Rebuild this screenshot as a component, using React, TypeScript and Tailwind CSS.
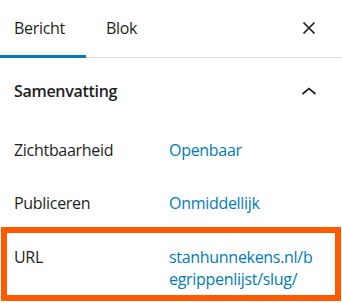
const CloseIcon = () => (
  <svg width="24" height="24" viewBox="0 0 24 24" fill="none">
    <path d="M6.5 6.5l11 11M17.5 6.5l-11 11" stroke="#1e1e1e" strokeWidth="1.7" />
  </svg>
);

const ChevronUp = () => (
  <svg width="24" height="24" viewBox="0 0 24 24" fill="none">
    <path d="M5.5 15l6.5-5.5 6.5 5.5" stroke="#1e1e1e" strokeWidth="1.7" />
  </svg>
);

const App = () => {
  return (
    <div
      className="w-[342px] h-[303px] bg-white text-[#1e1e1e] overflow-hidden text-[16px] tracking-[-0.3px]"
      style={{ fontFamily: '"Open Sans", "Noto Sans", sans-serif' }}
    >
      {/* Tabs */}
      <div className="flex h-[58px] border-b border-[#e0e0e0]">
        <div className="w-[86px] h-[58px] -mb-px flex items-center pl-[14px] pt-[1px] border-b-[3px] border-[#007cba]">
          Bericht
        </div>
        <div className="flex items-center pl-[20px] pb-[2px]">Blok</div>
        <div className="ml-auto mr-[21px] flex items-center pb-[2px]">
          <CloseIcon />
        </div>
      </div>

      {/* Samenvatting */}
      <div className="flex items-center justify-between h-[66px] pl-[14px] pr-[21px] pb-[1px]">
        <span className="font-semibold">Samenvatting</span>
        <ChevronUp />
      </div>

      {/* Rows */}
      <div className="flex flex-col">
        <div className="flex items-center h-[53px] pl-[14px] pb-[2px]">
          <span className="w-[155px]">Zichtbaarheid</span>
          <span className="text-[#007cba]">Openbaar</span>
        </div>
        <div className="flex items-center h-[53px] pl-[14px] pb-[2px]">
          <span className="w-[155px]">Publiceren</span>
          <span className="text-[#007cba]">Onmiddellijk</span>
        </div>
        <div className="mx-[1px] -mt-[3px] h-[74px] border-[6px] border-[#ff5a00] flex pl-[7px] pt-[13px]">
          <span className="w-[155px] leading-[22px]">URL</span>
          <span className="text-[#007cba] leading-[22px]">
            stanhunnekens.nl/b
            <br />
            egrippenlijst/slug/
          </span>
        </div>
      </div>
    </div>
  );
};

export default App;
